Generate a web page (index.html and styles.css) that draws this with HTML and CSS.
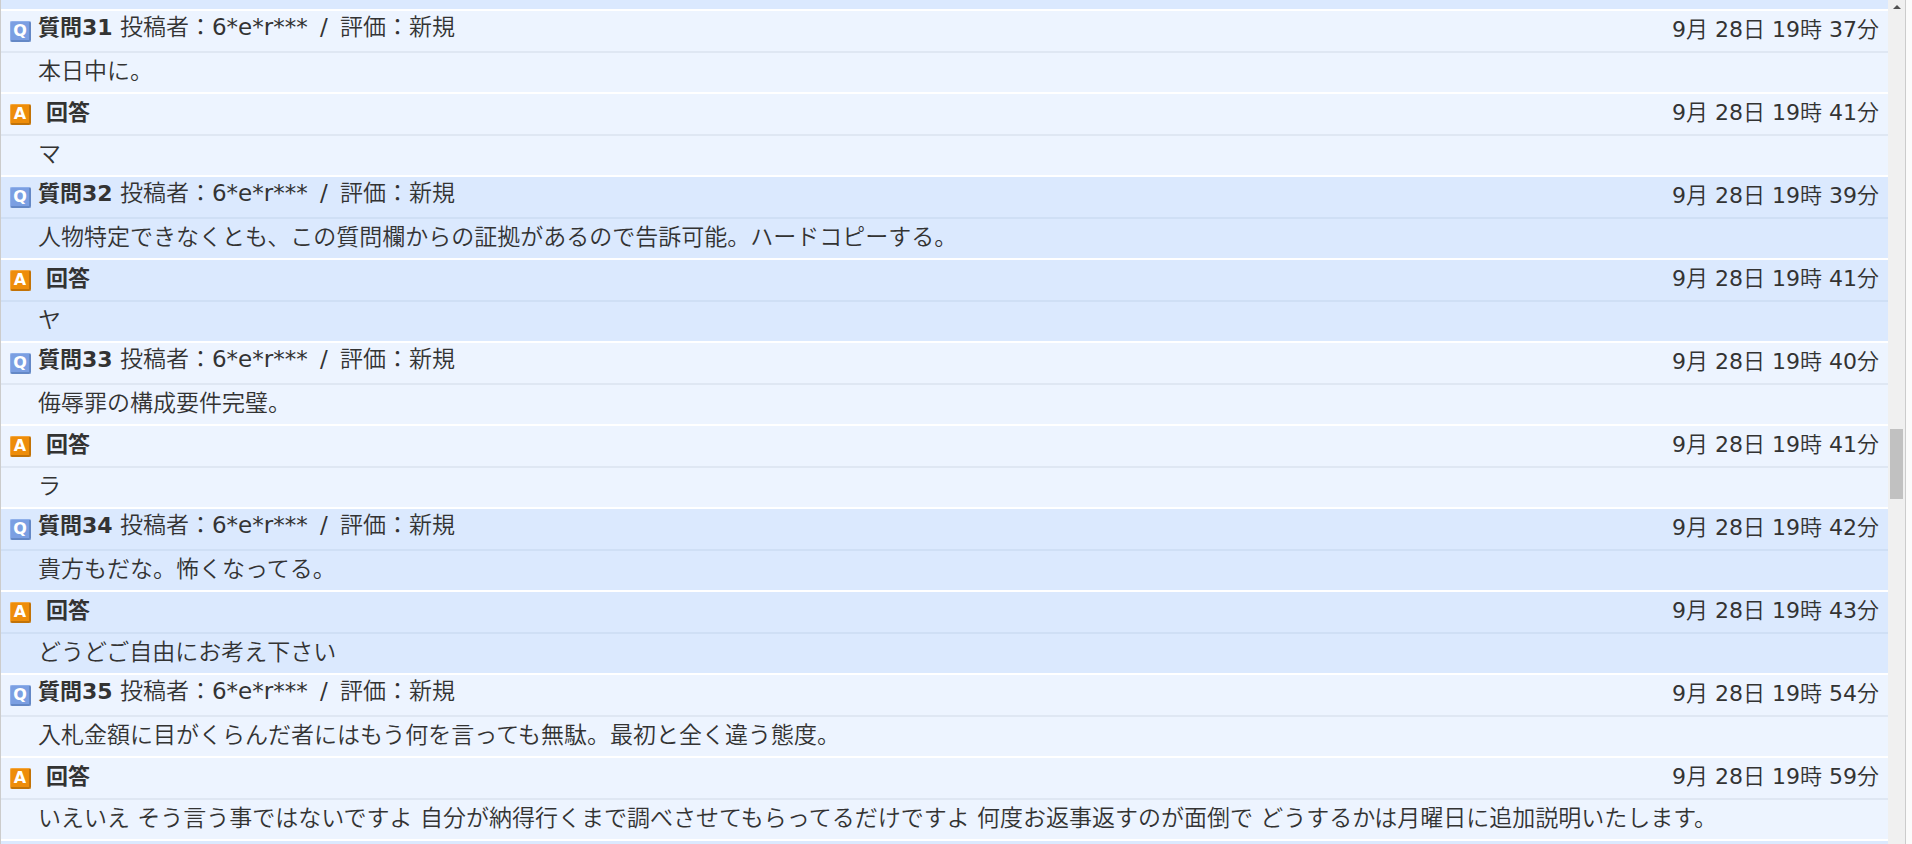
FILE: index.html
```html
<!DOCTYPE html>
<html lang="ja">
<head>
<meta charset="utf-8">
<title>質問と回答</title>
<link rel="stylesheet" href="styles.css">
</head>
<body>
<div class="frame">
<main class="list">
<div class="edge edge-top"></div>

<article class="qa">
<header class="head question"><span class="icon icon-q">Q</span><p class="title"><b>質問31</b> 投稿者：6*e*r*** <span class="slash">/</span> 評価：新規</p><time class="date">9月 28日 19時 37分</time></header>
<p class="body">本日中に。</p>
<header class="head answer"><span class="icon icon-a">A</span><p class="title"><b>回答</b></p><time class="date">9月 28日 19時 41分</time></header>
<p class="body">マ</p>
</article>

<article class="qa">
<header class="head question"><span class="icon icon-q">Q</span><p class="title"><b>質問32</b> 投稿者：6*e*r*** <span class="slash">/</span> 評価：新規</p><time class="date">9月 28日 19時 39分</time></header>
<p class="body">人物特定できなくとも、この質問欄からの証拠があるので告訴可能。ハードコピーする。</p>
<header class="head answer"><span class="icon icon-a">A</span><p class="title"><b>回答</b></p><time class="date">9月 28日 19時 41分</time></header>
<p class="body">ヤ</p>
</article>

<article class="qa">
<header class="head question"><span class="icon icon-q">Q</span><p class="title"><b>質問33</b> 投稿者：6*e*r*** <span class="slash">/</span> 評価：新規</p><time class="date">9月 28日 19時 40分</time></header>
<p class="body">侮辱罪の構成要件完璧。</p>
<header class="head answer"><span class="icon icon-a">A</span><p class="title"><b>回答</b></p><time class="date">9月 28日 19時 41分</time></header>
<p class="body">ラ</p>
</article>

<article class="qa">
<header class="head question"><span class="icon icon-q">Q</span><p class="title"><b>質問34</b> 投稿者：6*e*r*** <span class="slash">/</span> 評価：新規</p><time class="date">9月 28日 19時 42分</time></header>
<p class="body">貴方もだな。怖くなってる。</p>
<header class="head answer"><span class="icon icon-a">A</span><p class="title"><b>回答</b></p><time class="date">9月 28日 19時 43分</time></header>
<p class="body">どうどご自由にお考え下さい</p>
</article>

<article class="qa">
<header class="head question"><span class="icon icon-q">Q</span><p class="title"><b>質問35</b> 投稿者：6*e*r*** <span class="slash">/</span> 評価：新規</p><time class="date">9月 28日 19時 54分</time></header>
<p class="body">入札金額に目がくらんだ者にはもう何を言っても無駄。最初と全く違う態度。</p>
<header class="head answer"><span class="icon icon-a">A</span><p class="title"><b>回答</b></p><time class="date">9月 28日 19時 59分</time></header>
<p class="body">いえいえ そう言う事ではないですよ 自分が納得行くまで調べさせてもらってるだけですよ 何度お返事返すのが面倒で どうするかは月曜日に追加説明いたします。</p>
</article>

<div class="edge edge-bottom"></div>
</main>
<div class="scrollbar" aria-hidden="true">
<svg class="arrow" viewBox="0 0 8 4"><path d="M0 4 4 0l4 4z" fill="#505050"/></svg>
<div class="thumb"></div>
</div>
</div>
</body>
</html>
```
FILE: styles.css
```css
* {
  box-sizing: border-box;
}

body {
  margin: 0;
  background: #fbfbfb;
  color: #333;
  font-family: "DejaVu Sans", "Noto Sans CJK JP DemiLight", "Noto Sans CJK JP Light", "Noto Sans CJK JP", sans-serif;
  font-size: 23px;
  line-height: 32px;
}

p {
  margin: 0;
}

b {
  font-family: "DejaVu Sans", "Noto Sans CJK JP", sans-serif;
  font-size: 22px;
  font-weight: 700;
}

.frame {
  display: flex;
  height: 100vh;
  margin-right: 6px;
  border: solid #ccc;
  border-width: 0 1px;
  overflow: hidden;
}

.list {
  flex: 1;
  min-width: 0;
}

.edge {
  background: #dbe9fe;
}

.edge-top {
  height: 9px;
}

.edge-bottom {
  height: 40px;
  border-top: 2px solid #fff;
}

.qa {
  background: #edf4ff;
  --rule: #dfe7f3;
}

.qa:nth-of-type(even) {
  background: #dbe9fe;
  --rule: #cfdff5;
}

.head {
  display: flex;
  align-items: center;
  height: 44px;
  padding: 0 9px;
  border-top: 2px solid #fff;
  border-bottom: 2px solid var(--rule);
}

.title {
  flex: 1;
  padding-left: 7px;
}

.question .title {
  padding-bottom: 8px;
}

.answer .title {
  padding-bottom: 4px;
  padding-left: 15px;
}

.slash {
  margin: 0 5px;
}

.date {
  padding-bottom: 2px;
  font-size: 22px;
}

.icon {
  width: 21px;
  height: 21px;
  border-style: solid;
  border-width: 1px 2px 2px 1px;
  border-radius: 2px;
  color: #fff;
  font: bold 16px/18px "DejaVu Sans", sans-serif;
  text-align: center;
}

.icon-q {
  background: #7b9fe2;
  border-color: #8fb0ea #6488c6 #6488c6 #8fb0ea;
}

.icon-a {
  background: #ee8d0a;
  border-color: #f3a53c #c27308 #c27308 #f3a53c;
}

.body {
  min-height: 39px;
  padding: 2px 37px 5px;
}

.scrollbar {
  display: flex;
  flex-direction: column;
  align-items: center;
  width: 17px;
  padding-top: 5px;
  background: #f0f0f0;
}

.arrow {
  width: 8px;
  height: 4px;
}

.thumb {
  width: 13px;
  height: 70px;
  margin-top: 420px;
  background: #c1c1c1;
}
```
